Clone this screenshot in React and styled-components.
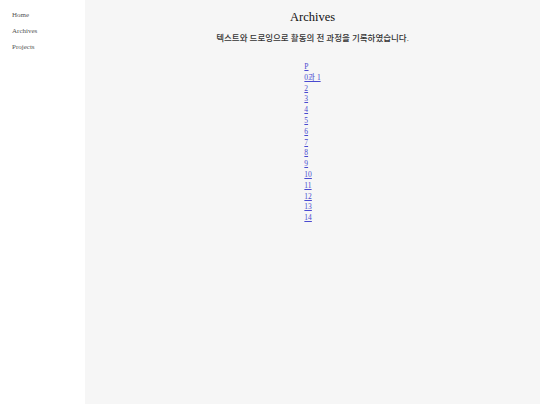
import styled, { createGlobalStyle } from 'styled-components';

const GlobalStyle = createGlobalStyle`
  html, body {
    margin: 0;
    padding: 0;
    background: #ffffff;
    font-family: "Liberation Serif", "Noto Sans CJK KR", serif;
  }
`;

const items = ['P', '0과 1', '2', '3', '4', '5', '6', '7', '8', '9', '10', '11', '12', '13', '14'];

function App() {
  return (
    <Page>
      <GlobalStyle />
      <Sidebar>
        <NavLink>Home</NavLink>
        <NavLink>Archives</NavLink>
        <NavLink>Projects</NavLink>
      </Sidebar>
      <Main>
        <Title>Archives</Title>
        <Subtitle>텍스트와 드로잉으로 활동의 전 과정을 기록하였습니다.</Subtitle>
        <List>
          {items.map((it) => (
            <Item key={it}>
              <Link href="#">{it}</Link>
            </Item>
          ))}
        </List>
      </Main>
    </Page>
  );
}

export default App;

const Page = styled.div`
  display: flex;
  height: 404px;
`;

const Sidebar = styled.nav`
  width: 85px;
  flex-shrink: 0;
  display: flex;
  flex-direction: column;
  gap: 7px;
  padding: 11px 0 0 12px;
  box-sizing: border-box;
  background: #ffffff;
`;

const NavLink = styled.div`
  font-size: 7px;
  line-height: 9px;
  color: #555;
`;

const Main = styled.main`
  flex: 1;
  background: #f6f6f6;
  display: flex;
  flex-direction: column;
  align-items: center;
  padding-top: 10px;
`;

const Title = styled.h1`
  margin: 0;
  font-size: 12.5px;
  font-weight: normal;
  line-height: 15px;
  color: #111;
`;

const Subtitle = styled.p`
  margin: 8px 0 0;
  font-size: 8.5px;
  font-weight: 500;
  line-height: 11px;
  color: #333;
`;

const List = styled.ul`
  list-style: none;
  margin: 18px 0 0;
  padding: 0;
`;

const Item = styled.li`
  font-size: 7.5px;
  line-height: 10.8px;
`;

const Link = styled.a`
  color: #4a4ad0;
  text-decoration: underline;
`;
